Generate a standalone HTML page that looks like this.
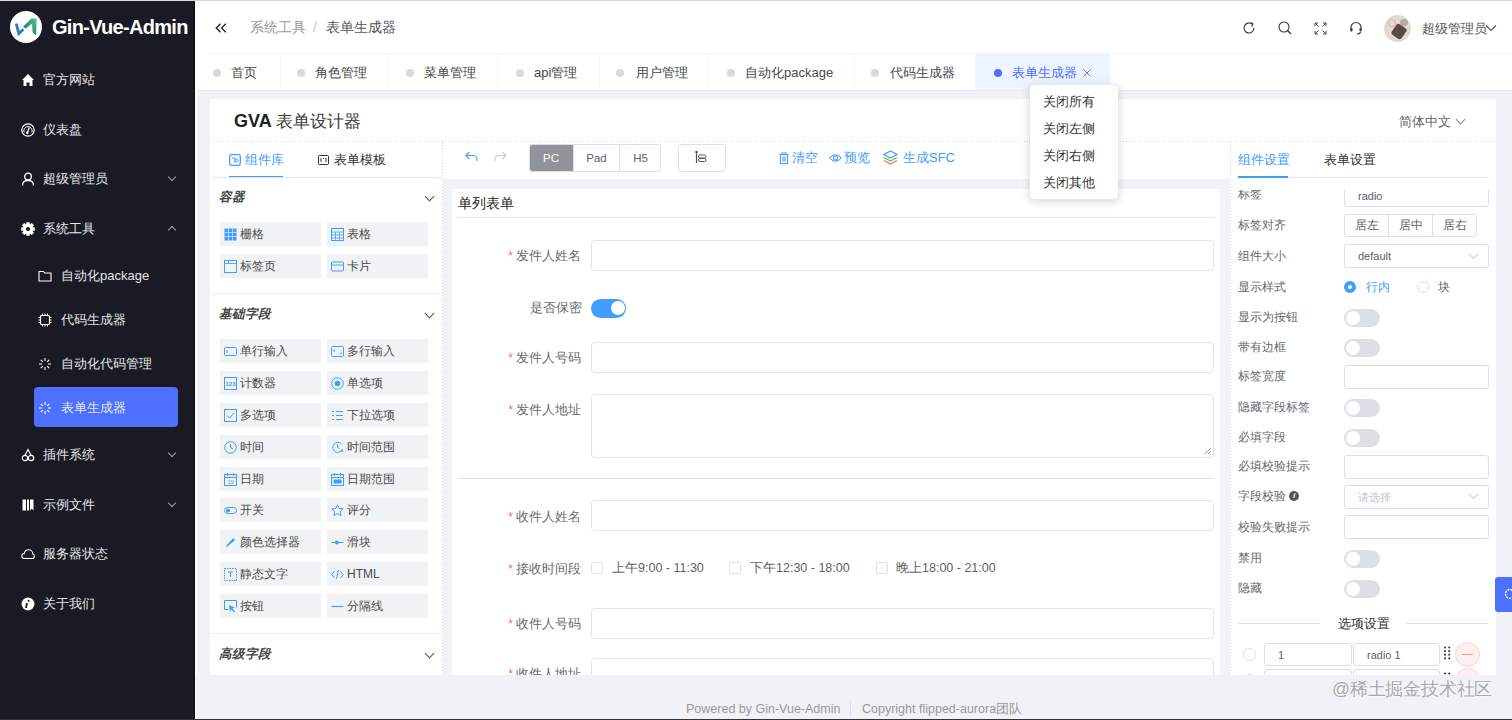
<!DOCTYPE html>
<html><head><meta charset="utf-8">
<style>
*{margin:0;padding:0;box-sizing:border-box}
html,body{width:1512px;height:720px;overflow:hidden;background:#f0f2f5;font-family:"Liberation Sans",sans-serif;color:#606266}
.a{position:absolute}
.t{position:absolute;white-space:nowrap;line-height:1}
#side{left:0;top:0;width:195px;height:720px;background:#191a23}
.mi{position:absolute;left:0;width:195px;height:20px;color:#e6e6ea;font-size:13px;line-height:20px}
.mi .tx{position:absolute;left:43px;top:0}
.mi svg{position:absolute;left:21px;top:3px}
.chev{position:absolute;left:169px;top:5px;width:6px;height:6px;border-right:1px solid #a0a3ab;border-bottom:1px solid #a0a3ab;transform:rotate(45deg)}
.chev.up{transform:rotate(-135deg);top:8px}
.sub .tx{left:61px}
.sub svg{left:38px}
#header{left:196px;top:1px;width:1316px;height:53px;background:#fff}
#tabs{left:196px;top:54px;width:1316px;height:36px;background:#fff}
.tab{position:absolute;top:0;height:36px;font-size:13px;line-height:38px;color:#484848;border-right:1px solid #f6f6f6}
.dot{position:absolute;top:15px;width:8px;height:8px;border-radius:50%;background:#d9d9d9}
#card{left:210px;top:99px;width:1286px;height:576px;background:#fff}
.dotline-h{position:absolute;height:1px;background-image:linear-gradient(to right,#d4d7dd 34%,transparent 34%);background-size:3px 1px}
.dotline-v{position:absolute;width:1px;background-image:linear-gradient(to bottom,#d4d7dd 34%,transparent 34%);background-size:1px 3px}
.btn{position:absolute;border:1px solid #dcdfe6;background:#fff;font-size:12px;color:#606266;text-align:center}
.comp{position:absolute;width:101px;height:24px;background:#f1f2f3;font-size:12px;line-height:25px;color:#4a4a4a}
.comp .tx{position:absolute;left:20px;top:0}
.comp svg{position:absolute;left:4px;top:6px}
.lab{position:absolute;font-size:12.5px;color:#68696e;white-space:nowrap;text-align:right}
.req{color:#f56c6c;font-size:12px;margin-right:3px}
.inp{position:absolute;border:1px solid #e2e4e8;border-radius:4px;background:#fff}
.rl{position:absolute;left:1238px;font-size:12px;color:#68696e;white-space:nowrap;line-height:14px}
.sw{position:absolute;width:36px;height:18px;border-radius:9px;background:#dcdfe6}
.sw::after{content:"";position:absolute;left:2px;top:2px;width:14px;height:14px;border-radius:50%;background:#fff}
.sw.on{background:#409eff}
.sw.on::after{left:20px}
.rin{position:absolute;border:1px solid #dcdfe6;border-radius:3px;background:#fff;font-size:11px;color:#606266;line-height:22px}
</style></head><body>

<!-- SIDEBAR -->
<div id="side" class="a">
  <div class="a" style="left:10px;top:11px;width:32px;height:32px;border-radius:50%;background:#fff">
    <svg width="32" height="32" viewBox="0 0 32 32" style="position:absolute;left:0;top:0">
      <defs><linearGradient id="lg" x1="0" y1="1" x2="1" y2="0"><stop offset="0" stop-color="#1d5f55"/><stop offset="0.5" stop-color="#2f9a78"/><stop offset="1" stop-color="#4cc596"/></linearGradient></defs>
      <path d="M6.3 12.6 L8.8 22.6 L13.4 18.2" stroke="#2f7cc0" stroke-width="2.8" fill="none" stroke-linejoin="miter"/>
      <path d="M13.2 15.6 L21.3 7.4 L26.6 7.4 L26.2 24.6 L22.6 21.2 L22.1 12.4 L15.4 17.8 Z" fill="url(#lg)"/>
    </svg>
  </div>
  <div class="t" style="left:52px;top:17px;font-size:20px;font-weight:bold;color:#fff;letter-spacing:-0.7px">Gin-Vue-Admin</div>

  <div class="mi" style="top:70px"><svg width="14" height="14" viewBox="0 0 14 14"><path d="M7 1 L13 7 L11.5 7 L11.5 13 L8.5 13 L8.5 9.5 L5.5 9.5 L5.5 13 L2.5 13 L2.5 7 L1 7 Z" fill="#fff"/></svg><span class="tx">官方网站</span></div>
  <div class="mi" style="top:120px"><svg width="14" height="14" viewBox="0 0 14 14"><circle cx="7" cy="7" r="6.2" stroke="#fff" stroke-width="1.2" fill="none"/><path d="M3.2 9.5 A4.2 4.2 0 1 1 10.8 9.5" stroke="#fff" stroke-width="1" fill="none"/><path d="M6 10.5 L8.3 4.5" stroke="#fff" stroke-width="1.3"/><circle cx="6.3" cy="9.8" r="1.2" fill="#fff"/></svg><span class="tx">仪表盘</span></div>
  <div class="mi" style="top:169px"><svg width="14" height="14" viewBox="0 0 14 14"><circle cx="7" cy="4.5" r="3.3" stroke="#fff" stroke-width="1.3" fill="none"/><path d="M1.5 13.5 C1.5 9.5 4 8.5 7 8.5 C10 8.5 12.5 9.5 12.5 13.5" stroke="#fff" stroke-width="1.3" fill="none"/></svg><span class="tx">超级管理员</span><span class="chev"></span></div>
  <div class="mi" style="top:219px"><svg width="14" height="14" viewBox="0 0 14 14" style="overflow:visible"><path d="M13.80 5.34 L13.80 8.66 L11.64 8.85 L11.59 8.97 L12.98 10.63 L10.63 12.98 L8.97 11.59 L8.85 11.64 L8.66 13.80 L5.34 13.80 L5.15 11.64 L5.03 11.59 L3.37 12.98 L1.02 10.63 L2.41 8.97 L2.36 8.85 L0.20 8.66 L0.20 5.34 L2.36 5.15 L2.41 5.03 L1.02 3.37 L3.37 1.02 L5.03 2.41 L5.15 2.36 L5.34 0.20 L8.66 0.20 L8.85 2.36 L8.97 2.41 L10.63 1.02 L12.98 3.37 L11.59 5.03 L11.64 5.15 Z M7 4.9 A2.1 2.1 0 1 0 7 9.1 A2.1 2.1 0 1 0 7 4.9 Z" fill="#fff" fill-rule="evenodd"/></svg><span class="tx">系统工具</span><span class="chev up"></span></div>

  <div class="mi sub" style="top:266px"><svg width="14" height="14" viewBox="0 0 14 14"><path d="M1 2.5 L5.5 2.5 L6.8 4 L13 4 L13 12 L1 12 Z" stroke="#fff" stroke-width="1.1" fill="none"/></svg><span class="tx">自动化package</span></div>
  <div class="mi sub" style="top:310px"><svg width="14" height="14" viewBox="0 0 14 14"><rect x="2.5" y="2.5" width="9" height="9" rx="1" stroke="#fff" stroke-width="1.2" fill="none"/><path d="M4.5 0.5v2M7 0.5v2M9.5 0.5v2M4.5 11.5v2M7 11.5v2M9.5 11.5v2M0.5 4.5h2M0.5 7h2M0.5 9.5h2M11.5 4.5h2M11.5 7h2M11.5 9.5h2" stroke="#fff" stroke-width="1"/></svg><span class="tx">代码生成器</span></div>
  <div class="mi sub" style="top:354px"><svg width="14" height="14" viewBox="0 0 14 14"><path d="M7 1v3M7 10v3M1 7h3M10 7h3M2.8 2.8l2 2M9.2 9.2l2 2M2.8 11.2l2-2M11.2 2.8l-2 2" stroke="#fff" stroke-width="1.1"/></svg><span class="tx">自动化代码管理</span></div>
  <div class="a" style="left:34px;top:387px;width:144px;height:40px;background:#4d70ff;border-radius:4px"></div>
  <div class="mi sub" style="top:398px"><svg width="14" height="14" viewBox="0 0 14 14"><path d="M7 1v3M7 10v3M1 7h3M10 7h3M2.8 2.8l2 2M9.2 9.2l2 2M2.8 11.2l2-2M11.2 2.8l-2 2" stroke="#fff" stroke-width="1.1"/></svg><span class="tx">表单生成器</span></div>

  <div class="mi" style="top:445px"><svg width="14" height="14" viewBox="0 0 14 14"><circle cx="4" cy="10" r="2.7" stroke="#fff" stroke-width="1.2" fill="none"/><circle cx="10" cy="10" r="2.7" stroke="#fff" stroke-width="1.2" fill="none"/><path d="M4 7.3 L7 1.5 L10 7.3" stroke="#fff" stroke-width="1.2" fill="none"/></svg><span class="tx">插件系统</span><span class="chev"></span></div>
  <div class="mi" style="top:495px"><svg width="14" height="14" viewBox="0 0 14 14"><path d="M1.5 1.5 H5 V12.5 H1.5 Z M6 1.5 H8 V12.5 H6 Z M9 1.5 H12.5 V12.5 L10.75 10.5 L9 12.5 Z" fill="#fff"/></svg><span class="tx">示例文件</span><span class="chev"></span></div>
  <div class="mi" style="top:544px"><svg width="14" height="14" viewBox="0 0 14 14"><path d="M3.5 11.5 C1.5 11.5 0.8 10 0.8 9 C0.8 7.5 2 6.5 3.2 6.6 C3.6 4.2 5.5 2.8 7.5 2.8 C10 2.8 11.8 4.8 11.8 7 C12.8 7.2 13.3 8.2 13.3 9.2 C13.3 10.5 12.3 11.5 11 11.5 Z" stroke="#fff" stroke-width="1.1" fill="none"/></svg><span class="tx">服务器状态</span></div>
  <div class="mi" style="top:594px"><svg width="14" height="14" viewBox="0 0 14 14"><circle cx="7" cy="7" r="6.5" fill="#fff"/><rect x="6.1" y="6" width="1.8" height="5" fill="#191a23" transform="skewX(-10)"/><circle cx="7.6" cy="3.8" r="1" fill="#191a23"/></svg><span class="tx">关于我们</span></div>
</div>
<div class="a" style="left:194px;top:0;width:1px;height:720px;background:#08080c"></div><div class="a" style="left:195px;top:0;width:2px;height:720px;background:#fff"></div><div class="a" style="left:197px;top:90px;width:1315px;height:1px;background:#e8eaee"></div>
<div class="a" style="left:0;top:0;width:1512px;height:1px;background:#d9d9d9"></div>

<!-- HEADER -->
<div id="header" class="a">
  <svg class="a" style="left:19px;top:22px" width="12" height="10" viewBox="0 0 12 10"><path d="M5.5 0.8 L1.2 5 L5.5 9.2 M10.8 0.8 L6.5 5 L10.8 9.2" stroke="#222" stroke-width="1.3" fill="none"/></svg>
  <div class="t" style="left:54px;top:19px;font-size:14px;color:#999">系统工具</div>
  <div class="t" style="left:117px;top:19px;font-size:14px;color:#c0c4cc">/</div>
  <div class="t" style="left:130px;top:19px;font-size:14px;color:#555">表单生成器</div>
</div>
<div class="a" style="left:207px;top:53px;width:1305px;height:1px;background:#f4f4f4"></div>

<!-- header right icons -->
<svg class="a" style="left:1242px;top:21px" width="14" height="14" viewBox="0 0 14 14"><path d="M12 7 A5 5 0 1 1 10 3" stroke="#333" stroke-width="1.1" fill="none"/><path d="M8.5 1.5 L11 3 L9.5 5.5" stroke="#333" stroke-width="1.1" fill="none"/></svg>
<svg class="a" style="left:1278px;top:21px" width="14" height="14" viewBox="0 0 14 14"><circle cx="6" cy="6" r="5" stroke="#333" stroke-width="1.1" fill="none"/><path d="M9.5 9.5 L13 13" stroke="#333" stroke-width="1.2"/></svg>
<svg class="a" style="left:1314px;top:22px" width="13" height="13" viewBox="0 0 13 13"><path d="M1 4V1h3M9 1h3v3M12 9v3H9M4 12H1V9M1 1l3.5 3.5M12 1L8.5 4.5M12 12L8.5 8.5M1 12l3.5-3.5" stroke="#444" stroke-width="1" fill="none"/></svg>
<svg class="a" style="left:1349px;top:21px" width="14" height="14" viewBox="0 0 14 14"><path d="M2 8 V6.5 A5 5 0 0 1 12 6.5 V8" stroke="#333" stroke-width="1.1" fill="none"/><rect x="1.3" y="7" width="2.2" height="3.6" rx="1" fill="#333"/><rect x="10.5" y="7" width="2.2" height="3.6" rx="1" fill="#333"/><path d="M11.5 11 Q11 13 8 13" stroke="#333" stroke-width="1.1" fill="none"/></svg>
<div class="a" style="left:1384px;top:15px;width:27px;height:27px;border-radius:50%;overflow:hidden;background:#e2d9d3"><div class="a" style="left:9px;top:10px;width:12px;height:13px;background:#5a4c44;transform:rotate(35deg);border-radius:3px"></div><div class="a" style="left:4px;top:4px;width:8px;height:8px;border-radius:50%;border:1.5px solid #e7a7b5"></div><div class="a" style="left:16px;top:4px;width:8px;height:7px;background:#b8aaa0;border-radius:50%"></div></div>
<div class="t" style="left:1422px;top:21.5px;font-size:13px;color:#555">超级管理员</div>
<svg class="a" style="left:1485px;top:24px" width="12" height="8" viewBox="0 0 12 8"><path d="M1 1.5 L6 6.5 L11 1.5" stroke="#555" stroke-width="1.1" fill="none"/></svg>

<!-- TABS -->
<div id="tabs" class="a">
  <div class="tab" style="left:0;width:85px"><span class="dot" style="left:17px"></span><span style="position:absolute;left:35px">首页</span></div>
  <div class="tab" style="left:85px;width:108px"><span class="dot" style="left:16px"></span><span style="position:absolute;left:34px">角色管理</span></div>
  <div class="tab" style="left:193px;width:109px"><span class="dot" style="left:17px"></span><span style="position:absolute;left:35px">菜单管理</span></div>
  <div class="tab" style="left:302px;width:102px"><span class="dot" style="left:18px"></span><span style="position:absolute;left:36px">api管理</span></div>
  <div class="tab" style="left:404px;width:109px"><span class="dot" style="left:16px"></span><span style="position:absolute;left:36px">用户管理</span></div>
  <div class="tab" style="left:513px;width:146px"><span class="dot" style="left:18px"></span><span style="position:absolute;left:36px">自动化package</span></div>
  <div class="tab" style="left:659px;width:121px"><span class="dot" style="left:16px"></span><span style="position:absolute;left:35px">代码生成器</span></div>
  <div class="tab" style="left:780px;width:134px;background:#eef4ff;color:#4d70ff;border-right:none"><span class="dot" style="left:18px;background:#4d70ff"></span><span style="position:absolute;left:36px;font-size:12.6px">表单生成器</span><svg style="position:absolute;left:107px;top:15px" width="8" height="8" viewBox="0 0 8 8"><path d="M0.5 0.5L7.5 7.5M7.5 0.5L0.5 7.5" stroke="#4d70ff" stroke-width="0.9"/></svg></div>
</div>

<!-- MAIN CARD -->
<div id="card" class="a"></div>
<div class="t" style="left:234px;top:112px;font-size:18px;font-weight:bold;color:#1f1f1f">GVA</div>
<div class="t" style="left:276px;top:113px;font-size:16.5px;color:#3a3a3a">表单设计器</div>
<div class="t" style="left:1399px;top:115px;font-size:13px;color:#606266">简体中文</div>
<div class="a" style="left:1457px;top:116px;width:7px;height:7px;border-right:1px solid #888;border-bottom:1px solid #888;transform:rotate(45deg)"></div>
<div class="dotline-h" style="left:211px;top:141px;width:1285px"></div>


<!-- LEFT PANEL -->
<svg class="a" style="left:229px;top:154px" width="12" height="12" viewBox="0 0 12 12"><rect x="0.7" y="0.7" width="10.6" height="10.6" rx="2" stroke="#409eff" stroke-width="1.3" fill="none"/><path d="M3 4h3v4.5" stroke="#409eff" fill="none"/><circle cx="7.5" cy="6.5" r="1.5" stroke="#409eff" fill="none"/></svg>
<div class="t" style="left:245px;top:153px;font-size:13px;color:#409eff">组件库</div>
<div class="a" style="left:229px;top:176px;width:54px;height:2px;background:#409eff"></div>
<svg class="a" style="left:318px;top:155px" width="11" height="10" viewBox="0 0 11 10"><rect x="0.5" y="0.5" width="10" height="9" rx="1" stroke="#333" fill="none"/><path d="M3 3v4M5.5 3v1M8 3v4" stroke="#333"/></svg>
<div class="t" style="left:334px;top:153px;font-size:13px;color:#333">表单模板</div>
<div class="a" style="left:212px;top:177px;width:230px;height:1px;background:#e4e7ed"></div>
<div class="t" style="left:219px;top:191px;font-size:12.5px;font-weight:bold;font-style:italic;color:#444">容器</div>
<div class="a" style="left:426px;top:193px;width:7px;height:7px;border-right:1px solid #555;border-bottom:1px solid #555;transform:rotate(45deg)"></div>
<div class="comp" style="left:220px;top:222px"><svg width="13" height="13" viewBox="0 0 13 13"><rect x="0.5" y="0.5" width="3.6" height="3.6" fill="#409eff"/><rect x="0.5" y="4.7" width="3.6" height="3.6" fill="#409eff"/><rect x="0.5" y="8.9" width="3.6" height="3.6" fill="#409eff"/><rect x="4.7" y="0.5" width="3.6" height="3.6" fill="#409eff"/><rect x="4.7" y="4.7" width="3.6" height="3.6" fill="#409eff"/><rect x="4.7" y="8.9" width="3.6" height="3.6" fill="#409eff"/><rect x="8.9" y="0.5" width="3.6" height="3.6" fill="#409eff"/><rect x="8.9" y="4.7" width="3.6" height="3.6" fill="#409eff"/><rect x="8.9" y="8.9" width="3.6" height="3.6" fill="#409eff"/></svg><span class="tx">栅格</span></div>
<div class="comp" style="left:327px;top:222px"><svg width="13" height="13" viewBox="0 0 13 13"><rect x="0.5" y="0.5" width="12" height="12" stroke="#409eff" fill="none"/><path d="M0.5 4h12M0.5 7h12M0.5 10h12M4.5 4v8.5M8.5 4v8.5" stroke="#409eff" stroke-width="0.8"/></svg><span class="tx">表格</span></div>
<div class="comp" style="left:220px;top:254px"><svg width="13" height="13" viewBox="0 0 13 13"><rect x="0.5" y="0.5" width="12" height="12" stroke="#409eff" fill="none"/><path d="M0.5 3.5h12M4.5 0.5v3" stroke="#409eff" stroke-width="0.9"/></svg><span class="tx">标签页</span></div>
<div class="comp" style="left:327px;top:254px"><svg width="13" height="13" viewBox="0 0 13 13"><rect x="0.5" y="2" width="12" height="9" rx="1" stroke="#409eff" fill="none"/><path d="M0.5 5h12" stroke="#409eff" stroke-width="0.9"/></svg><span class="tx">卡片</span></div>
<div class="a" style="left:212px;top:293px;width:230px;height:1px;background:#ebeef5"></div>
<div class="t" style="left:219px;top:308px;font-size:12.5px;font-weight:bold;font-style:italic;color:#444">基础字段</div>
<div class="a" style="left:426px;top:310px;width:7px;height:7px;border-right:1px solid #555;border-bottom:1px solid #555;transform:rotate(45deg)"></div>
<div class="comp" style="left:220px;top:339px"><svg width="13" height="13" viewBox="0 0 13 13"><rect x="0.5" y="2.5" width="12" height="8" rx="1" stroke="#409eff" fill="none"/><path d="M3 5v3" stroke="#409eff"/></svg><span class="tx">单行输入</span></div>
<div class="comp" style="left:327px;top:339px"><svg width="13" height="13" viewBox="0 0 13 13"><rect x="0.5" y="1.5" width="12" height="10" rx="1" stroke="#409eff" fill="none"/><path d="M3 4v3M9 9.5l2-2" stroke="#409eff"/></svg><span class="tx">多行输入</span></div>
<div class="comp" style="left:220px;top:371px"><svg width="13" height="13" viewBox="0 0 13 13"><rect x="0.5" y="0.5" width="12" height="12" stroke="#409eff" fill="none"/><text x="6.5" y="9.3" font-size="6" font-family="Liberation Sans" font-weight="bold" text-anchor="middle" fill="#409eff">123</text></svg><span class="tx">计数器</span></div>
<div class="comp" style="left:327px;top:371px"><svg width="13" height="13" viewBox="0 0 13 13"><circle cx="6.5" cy="6.5" r="5.8" stroke="#409eff" fill="none"/><circle cx="6.5" cy="6.5" r="2.8" fill="#409eff"/></svg><span class="tx">单选项</span></div>
<div class="comp" style="left:220px;top:403px"><svg width="13" height="13" viewBox="0 0 13 13"><rect x="0.5" y="0.5" width="12" height="12" stroke="#409eff" fill="none"/><path d="M3 6.5l2.5 2.5 4.5-5" stroke="#409eff" fill="none"/></svg><span class="tx">多选项</span></div>
<div class="comp" style="left:327px;top:403px"><svg width="13" height="13" viewBox="0 0 13 13"><path d="M1 2.5h2M5 2.5h7M1 6.5h2M5 6.5h7M1 10.5h2M5 10.5h7" stroke="#409eff"/></svg><span class="tx">下拉选项</span></div>
<div class="comp" style="left:220px;top:435px"><svg width="13" height="13" viewBox="0 0 13 13"><circle cx="6.5" cy="6.5" r="5.8" stroke="#409eff" fill="none"/><path d="M6.5 3v3.5l2.5 1.5" stroke="#409eff" fill="none"/></svg><span class="tx">时间</span></div>
<div class="comp" style="left:327px;top:435px"><svg width="13" height="13" viewBox="0 0 13 13"><path d="M10.5 3 A5 5 0 1 0 11.5 8" stroke="#409eff" fill="none"/><path d="M6.5 3.5v3l2 1" stroke="#409eff" fill="none"/><path d="M9 10h3.5" stroke="#409eff"/></svg><span class="tx">时间范围</span></div>
<div class="comp" style="left:220px;top:467px"><svg width="13" height="13" viewBox="0 0 13 13"><rect x="0.5" y="1.5" width="12" height="11" stroke="#409eff" fill="none"/><path d="M0.5 4.5h12M3.5 0v3M9.5 0v3" stroke="#409eff"/><text x="6.5" y="11" font-size="5.5" font-family="Liberation Sans" text-anchor="middle" fill="#409eff">19</text></svg><span class="tx">日期</span></div>
<div class="comp" style="left:327px;top:467px"><svg width="13" height="13" viewBox="0 0 13 13"><rect x="0.5" y="1.5" width="12" height="11" stroke="#409eff" fill="none"/><path d="M0.5 4.5h12M3.5 0v3M9.5 0v3" stroke="#409eff"/><rect x="2.5" y="6.5" width="8" height="4" fill="#409eff"/></svg><span class="tx">日期范围</span></div>
<div class="comp" style="left:220px;top:498px"><svg width="13" height="13" viewBox="0 0 13 13"><rect x="0.5" y="3.5" width="12" height="6" rx="3" stroke="#409eff" fill="none"/><circle cx="4" cy="6.5" r="2" fill="#409eff"/></svg><span class="tx">开关</span></div>
<div class="comp" style="left:327px;top:498px"><svg width="13" height="13" viewBox="0 0 13 13"><path d="M6.5 0.8l1.7 3.7 4 .4-3 2.7.9 4-3.6-2.1-3.6 2.1.9-4-3-2.7 4-.4z" stroke="#409eff" fill="none"/></svg><span class="tx">评分</span></div>
<div class="comp" style="left:220px;top:530px"><svg width="13" height="13" viewBox="0 0 13 13"><path d="M2 12l1-3 6-7 2 2-7 6z" fill="#409eff"/></svg><span class="tx">颜色选择器</span></div>
<div class="comp" style="left:327px;top:530px"><svg width="13" height="13" viewBox="0 0 13 13"><path d="M0.5 6.5h12" stroke="#409eff"/><circle cx="6" cy="6.5" r="2" fill="#409eff"/></svg><span class="tx">滑块</span></div>
<div class="comp" style="left:220px;top:562px"><svg width="13" height="13" viewBox="0 0 13 13"><rect x="0.5" y="0.5" width="12" height="12" stroke="#409eff" fill="none" stroke-dasharray="1.5 1"/><path d="M4 4h5M6.5 4v5" stroke="#409eff"/></svg><span class="tx">静态文字</span></div>
<div class="comp" style="left:327px;top:562px"><svg width="13" height="13" viewBox="0 0 13 13"><path d="M3.5 3L0.8 6.5 3.5 10M9.5 3l2.7 3.5L9.5 10M7.5 2L5.5 11" stroke="#409eff" fill="none"/></svg><span class="tx">HTML</span></div>
<div class="comp" style="left:220px;top:594px"><svg width="13" height="13" viewBox="0 0 13 13"><path d="M0.5 0.5h12v7M0.5 0.5v9h4" stroke="#409eff" fill="none"/><path d="M5 5l6 2.5-2.5 1 2.5 3-1 1-2.5-3-1.5 2z" fill="#409eff"/></svg><span class="tx">按钮</span></div>
<div class="comp" style="left:327px;top:594px"><svg width="13" height="13" viewBox="0 0 13 13"><path d="M0.5 6.5h12" stroke="#409eff" stroke-width="1.2"/></svg><span class="tx">分隔线</span></div>
<div class="a" style="left:212px;top:633px;width:230px;height:1px;background:#ebeef5"></div>
<div class="t" style="left:219px;top:648px;font-size:12.5px;font-weight:bold;font-style:italic;color:#444">高级字段</div>
<div class="a" style="left:426px;top:650px;width:7px;height:7px;border-right:1px solid #555;border-bottom:1px solid #555;transform:rotate(45deg)"></div>
<div class="dotline-v" style="left:442px;top:142px;height:533px"></div>

<!-- CENTER -->
<svg class="a" style="left:465px;top:151px" width="13" height="11" viewBox="0 0 13 11"><path d="M1 4.5 H8 A4 4 0 0 1 12 8.5 V10" stroke="#409eff" stroke-width="1.2" fill="none"/><path d="M4.5 1 L1 4.5 L4.5 8" stroke="#409eff" stroke-width="1.2" fill="none"/></svg>
<svg class="a" style="left:494px;top:151px" width="13" height="11" viewBox="0 0 13 11"><path d="M12 4.5 H5 A4 4 0 0 0 1 8.5 V10" stroke="#c8ccd4" stroke-width="1.2" fill="none"/><path d="M8.5 1 L12 4.5 L8.5 8" stroke="#c8ccd4" stroke-width="1.2" fill="none"/></svg>
<div class="a" style="left:529px;top:144px;width:132px;height:28px;border:1px solid #dcdfe6;border-radius:3px;background:#fff;overflow:hidden"><div class="a" style="left:-1px;top:-1px;width:44px;height:28px;background:#909399;color:#fff;font-size:11.5px;line-height:28px;text-align:center">PC</div><div class="a" style="left:43px;top:-1px;width:47px;height:28px;border-left:1px solid #dcdfe6;border-right:1px solid #dcdfe6;color:#606266;font-size:11.5px;line-height:28px;text-align:center">Pad</div><div class="a" style="left:90px;top:-1px;width:41px;height:28px;color:#606266;font-size:11.5px;line-height:28px;text-align:center">H5</div></div>
<div class="a" style="left:678px;top:144px;width:48px;height:28px;border:1px solid #dcdfe6;border-radius:3px;background:#fff"></div>
<svg class="a" style="left:695px;top:150px" width="12" height="14" viewBox="0 0 12 14"><path d="M1.5 1v12" stroke="#555" stroke-width="1.2"/><circle cx="1.5" cy="2" r="1.2" fill="#555"/><rect x="3.5" y="5" width="7.5" height="3" rx="1.5" stroke="#555" fill="none"/><rect x="3.5" y="8.5" width="7.5" height="3" rx="1.5" stroke="#555" fill="none"/></svg>
<svg class="a" style="left:779px;top:152px" width="10" height="12" viewBox="0 0 10 12"><path d="M0.5 2.5h9M3 2.5V1h4v1.5M1.5 2.5v9h7v-9M4 4.5v5M6 4.5v5" stroke="#409eff" stroke-width="1.1" fill="none"/></svg>
<div class="t" style="left:792px;top:151px;font-size:13px;color:#409eff">清空</div>
<svg class="a" style="left:829px;top:153px" width="13" height="10" viewBox="0 0 13 10"><path d="M0.7 5 Q6.5 -1.5 12.3 5 Q6.5 11.5 0.7 5Z" stroke="#409eff" stroke-width="1.1" fill="none"/><circle cx="6.5" cy="5" r="2" stroke="#409eff" stroke-width="1.1" fill="none"/></svg>
<div class="t" style="left:844px;top:151px;font-size:13px;color:#409eff">预览</div>
<svg class="a" style="left:883px;top:150px" width="15" height="15" viewBox="0 0 15 15"><path d="M7.5 1 L14 4.5 L7.5 8 L1 4.5 Z" stroke="#409eff" stroke-width="1.2" fill="none"/><path d="M1 7.5 L7.5 11 L14 7.5" stroke="#67c23a" stroke-width="1.2" fill="none"/><path d="M1 10.5 L7.5 14 L14 10.5" stroke="#f56c6c" stroke-width="1.2" fill="none"/></svg>
<div class="t" style="left:903px;top:151px;font-size:13px;color:#409eff">生成SFC</div>
<div class="a" style="left:443px;top:179px;width:787px;height:496px;background:#f0f2f5"></div>
<div class="a" style="left:452px;top:189px;width:768px;height:486px;background:#fff"></div>
<div class="t" style="left:458px;top:196px;font-size:14px;color:#222">单列表单</div>
<div class="a" style="left:458px;top:217px;width:756px;height:1px;background:#e4e7ed"></div>
<div class="lab" style="right:931px;top:249px;line-height:14px"><span class="req">*</span>发件人姓名</div>
<div class="inp" style="left:591px;top:240px;width:623px;height:31px"></div>
<div class="lab" style="right:930px;top:301px;line-height:14px">是否保密</div>
<div class="sw on" style="left:591px;top:299px;width:35px;height:19px;border-radius:10px"></div>
<div class="lab" style="right:931px;top:351px;line-height:14px"><span class="req">*</span>发件人号码</div>
<div class="inp" style="left:591px;top:342px;width:623px;height:31px"></div>
<div class="lab" style="right:931px;top:403px;line-height:14px"><span class="req">*</span>发件人地址</div>
<div class="inp" style="left:591px;top:394px;width:623px;height:64px"></div>
<svg class="a" style="left:1204px;top:447px" width="8" height="8" viewBox="0 0 8 8"><path d="M1 7L7 1M4 7L7 4" stroke="#888" stroke-width="0.8"/></svg>
<div class="a" style="left:458px;top:478px;width:756px;height:1px;background:#dcdfe6"></div>
<div class="lab" style="right:931px;top:510px;line-height:14px"><span class="req">*</span>收件人姓名</div>
<div class="inp" style="left:591px;top:500px;width:623px;height:31px"></div>
<div class="lab" style="right:931px;top:562px;line-height:14px"><span class="req">*</span>接收时间段</div>
<div class="a" style="left:591px;top:562px;width:12px;height:12px;border:1px solid #e0e2e6;border-radius:2px;background:#fff"></div>
<div class="t" style="left:612px;top:561px;font-size:12.5px;color:#606266;line-height:14px">上午9:00 - 11:30</div>
<div class="a" style="left:729px;top:562px;width:12px;height:12px;border:1px solid #e0e2e6;border-radius:2px;background:#fff"></div>
<div class="t" style="left:750px;top:561px;font-size:12.5px;color:#606266;line-height:14px">下午12:30 - 18:00</div>
<div class="a" style="left:876px;top:562px;width:12px;height:12px;border:1px solid #e0e2e6;border-radius:2px;background:#fff"></div>
<div class="t" style="left:896px;top:561px;font-size:12.5px;color:#606266;line-height:14px">晚上18:00 - 21:00</div>
<div class="lab" style="right:931px;top:617px;line-height:14px"><span class="req">*</span>收件人号码</div>
<div class="inp" style="left:591px;top:608px;width:623px;height:31px"></div>
<div class="lab" style="right:931px;top:667px;line-height:14px"><span class="req">*</span>收件人地址</div>
<div class="inp" style="left:591px;top:658px;width:623px;height:31px"></div>
<div class="a" style="left:196px;top:675px;width:1316px;height:45px;background:#f0f2f5"></div>
<div class="dotline-v" style="left:1230px;top:142px;height:533px"></div>

<!-- RIGHT PANEL -->
<div class="t" style="left:1238px;top:153px;font-size:13px;color:#409eff">组件设置</div>
<div class="t" style="left:1324px;top:153px;font-size:13px;color:#303133">表单设置</div>
<div class="a" style="left:1238px;top:177px;width:251px;height:1px;background:#e4e7ed"></div>
<div class="a" style="left:1238px;top:176px;width:50px;height:2px;background:#409eff"></div>
<div class="a" style="left:1231px;top:190px;width:265px;height:485px;overflow:hidden">
<div class="rl" style="left:7px;top:-3px">标签</div>
<div class="rin" style="left:113px;top:-6px;width:145px;height:23px;padding-left:13px;color:#606266">radio</div>
<div class="rl" style="left:7px;top:28px">标签对齐</div>
<div class="a" style="left:113px;top:24px;width:133px;height:23px;border:1px solid #dcdfe6;border-radius:3px;background:#fff"></div>
<div class="t" style="left:113px;top:29px;width:45px;text-align:center;font-size:11.5px;color:#606266;line-height:13px">居左</div>
<div class="a" style="left:157px;top:24px;width:1px;height:23px;background:#dcdfe6"></div>
<div class="t" style="left:157px;top:29px;width:45px;text-align:center;font-size:11.5px;color:#606266;line-height:13px">居中</div>
<div class="a" style="left:201px;top:24px;width:1px;height:23px;background:#dcdfe6"></div>
<div class="t" style="left:201px;top:29px;width:45px;text-align:center;font-size:11.5px;color:#606266;line-height:13px">居右</div>
<div class="rl" style="left:7px;top:59px">组件大小</div>
<div class="rin" style="left:113px;top:54px;width:145px;height:24px;padding-left:13px;color:#606266">default</div>
<div class="a" style="left:239px;top:61px;width:7px;height:7px;border-right:1px solid #c0c4cc;border-bottom:1px solid #c0c4cc;transform:scaleY(0.8) rotate(45deg)"></div>
<div class="rl" style="left:7px;top:90px">显示样式</div>
<div class="a" style="left:113px;top:91px;width:12px;height:12px;border-radius:50%;background:#409eff"></div><div class="a" style="left:117px;top:95px;width:4px;height:4px;border-radius:50%;background:#fff"></div>
<div class="t" style="left:135px;top:90px;font-size:12px;color:#409eff;line-height:14px">行内</div>
<div class="a" style="left:186px;top:91px;width:12px;height:12px;border-radius:50%;border:1px solid #dcdfe6;background:#fff"></div>
<div class="t" style="left:207px;top:90px;font-size:12px;color:#606266;line-height:14px">块</div>
<div class="rl" style="left:7px;top:120px">显示为按钮</div>
<div class="sw" style="left:113px;top:119px;width:36px;height:18px"></div>
<div class="rl" style="left:7px;top:150px">带有边框</div>
<div class="sw" style="left:113px;top:149px;width:36px;height:18px"></div>
<div class="rl" style="left:7px;top:179px">标签宽度</div>
<div class="rin" style="left:113px;top:175px;width:145px;height:24px;padding-left:13px;color:#606266"></div>
<div class="rl" style="left:7px;top:210px">隐藏字段标签</div>
<div class="sw" style="left:113px;top:209px;width:36px;height:18px"></div>
<div class="rl" style="left:7px;top:240px">必填字段</div>
<div class="sw" style="left:113px;top:239px;width:36px;height:18px"></div>
<div class="rl" style="left:7px;top:269px">必填校验提示</div>
<div class="rin" style="left:113px;top:265px;width:145px;height:24px;padding-left:13px;color:#606266"></div>
<div class="rl" style="left:7px;top:299px">字段校验</div>
<div class="rin" style="left:113px;top:295px;width:145px;height:24px;padding-left:13px;color:#c0c4cc">请选择</div>
<div class="a" style="left:239px;top:301px;width:7px;height:7px;border-right:1px solid #c0c4cc;border-bottom:1px solid #c0c4cc;transform:scaleY(0.8) rotate(45deg)"></div>
<div class="a" style="left:58px;top:301px;width:10px;height:10px;border-radius:50%;background:#555;color:#fff;font-size:8px;line-height:10px;text-align:center;font-weight:bold;font-style:italic">i</div>
<div class="rl" style="left:7px;top:330px">校验失败提示</div>
<div class="rin" style="left:113px;top:325px;width:145px;height:24px;padding-left:13px;color:#606266"></div>
<div class="rl" style="left:7px;top:361px">禁用</div>
<div class="sw" style="left:113px;top:360px;width:36px;height:18px"></div>
<div class="rl" style="left:7px;top:391px">隐藏</div>
<div class="sw" style="left:113px;top:390px;width:36px;height:18px"></div>
<div class="a" style="left:7px;top:433px;width:82px;height:1px;background:#dcdfe6"></div>
<div class="a" style="left:175px;top:433px;width:82px;height:1px;background:#dcdfe6"></div>
<div class="t" style="left:107px;top:427px;font-size:12.5px;color:#303133;line-height:14px">选项设置</div>
<div class="a" style="left:12px;top:458px;width:13px;height:13px;border-radius:50%;border:1px solid #dcdfe6;background:#fff"></div>
<div class="rin" style="left:33px;top:453px;width:88px;height:23px;padding-left:13px;color:#606266">1</div>
<div class="rin" style="left:122px;top:453px;width:87px;height:23px;padding-left:13px;color:#606266">radio 1</div>
<svg class="a" style="left:212px;top:456px" width="9" height="14" viewBox="0 0 9 14"><circle cx="2.0" cy="1.5" r="1.1" fill="#444"/><circle cx="2.0" cy="5.1" r="1.1" fill="#444"/><circle cx="2.0" cy="8.7" r="1.1" fill="#444"/><circle cx="2.0" cy="12.3" r="1.1" fill="#444"/><circle cx="6.2" cy="1.5" r="1.1" fill="#444"/><circle cx="6.2" cy="5.1" r="1.1" fill="#444"/><circle cx="6.2" cy="8.7" r="1.1" fill="#444"/><circle cx="6.2" cy="12.3" r="1.1" fill="#444"/></svg>
<div class="a" style="left:224px;top:452px;width:25px;height:25px;border-radius:50%;background:#fef0f0;border:1px solid #fbd3d3"></div>
<div class="a" style="left:231px;top:464px;width:11px;height:1px;background:#f89898"></div>
<div class="a" style="left:12px;top:484px;width:13px;height:13px;border-radius:50%;border:1px solid #dcdfe6;background:#fff"></div>
<div class="rin" style="left:33px;top:479px;width:88px;height:23px;padding-left:13px;color:#606266"></div>
<div class="rin" style="left:122px;top:479px;width:87px;height:23px;padding-left:13px;color:#606266"></div>
<svg class="a" style="left:212px;top:482px" width="9" height="14" viewBox="0 0 9 14"><circle cx="2.0" cy="1.5" r="1.1" fill="#444"/><circle cx="2.0" cy="5.1" r="1.1" fill="#444"/><circle cx="2.0" cy="8.7" r="1.1" fill="#444"/><circle cx="2.0" cy="12.3" r="1.1" fill="#444"/><circle cx="6.2" cy="1.5" r="1.1" fill="#444"/><circle cx="6.2" cy="5.1" r="1.1" fill="#444"/><circle cx="6.2" cy="8.7" r="1.1" fill="#444"/><circle cx="6.2" cy="12.3" r="1.1" fill="#444"/></svg>
<div class="a" style="left:224px;top:478px;width:25px;height:25px;border-radius:50%;background:#fef0f0;border:1px solid #fbd3d3"></div>
<div class="a" style="left:231px;top:490px;width:11px;height:1px;background:#f89898"></div>
</div>
<div class="a" style="left:1495px;top:577px;width:17px;height:35px;background:#4d70ff;border-radius:3px 0 0 3px"></div>
<svg class="a" style="left:1503px;top:587px" width="9" height="14" viewBox="0 0 9 14"><circle cx="7" cy="7" r="4.5" stroke="#fff" stroke-width="1.4" fill="none" stroke-dasharray="2 1"/></svg>

<!-- DROPDOWN -->
<div class="a" style="left:1029px;top:84px;width:90px;height:116px;background:#fff;border:1px solid #e4e7ed;border-radius:4px;box-shadow:0 2px 8px rgba(0,0,0,0.15)"></div>
<div class="t" style="left:1043px;top:95px;font-size:13px;color:#333;line-height:14px">关闭所有</div>
<div class="t" style="left:1043px;top:122px;font-size:13px;color:#333;line-height:14px">关闭左侧</div>
<div class="t" style="left:1043px;top:149px;font-size:13px;color:#333;line-height:14px">关闭右侧</div>
<div class="t" style="left:1043px;top:175.5px;font-size:13px;color:#333;line-height:14px">关闭其他</div>

<!-- FOOTER -->
<div class="t" id="f1" style="left:686px;top:702px;font-size:12.5px;color:#999;line-height:14px">Powered by Gin-Vue-Admin</div>
<div class="a" style="left:850px;top:702px;width:1px;height:14px;background:#dcdfe6"></div>
<div class="t" id="f2" style="left:862px;top:702px;font-size:12.5px;color:#999;line-height:14px">Copyright flipped-aurora团队</div>
<div class="t" id="wm" style="left:1332px;top:679px;font-size:17.8px;color:#a8a8a8;line-height:20px;text-shadow:0 0 2px #fff,0 0 2px #fff;letter-spacing:-0.2px">@稀土掘金技术社区</div>
<div class="a" style="left:0;top:719px;width:1512px;height:1px;background:#333"></div>
</body></html>
